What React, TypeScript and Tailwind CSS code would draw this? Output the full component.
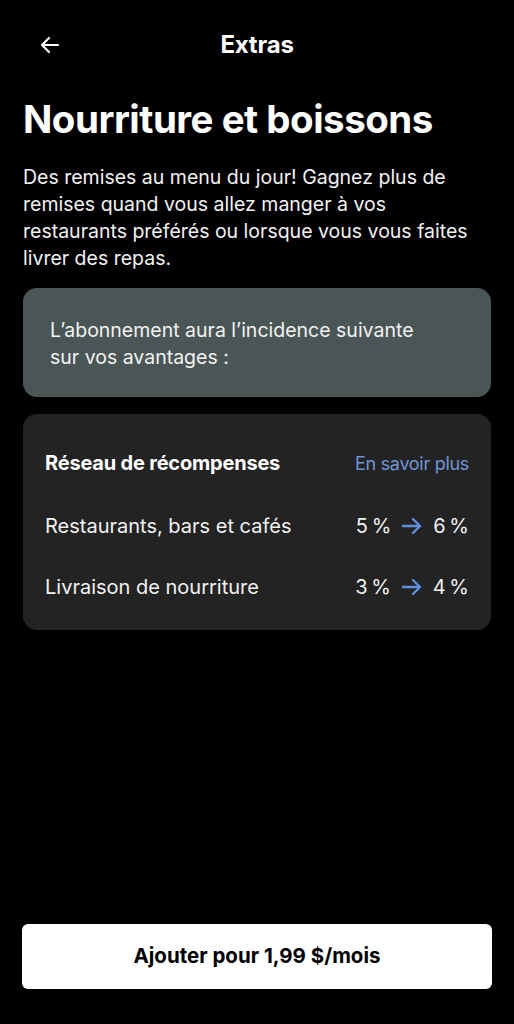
import React from "react";

function Arrow({ className }: { className?: string }) {
  return (
    <svg viewBox="0 0 24 24" className={className} fill="none" stroke="currentColor" strokeWidth={2.2} strokeLinecap="round" strokeLinejoin="round">
      <path d="M20 12H4M11 5l-7 7 7 7" />
    </svg>
  );
}

function RightArrow() {
  return (
    <svg viewBox="0 0 24 24" className="w-[24px] h-[24px] text-[#5f8fe0]" fill="none" stroke="currentColor" strokeWidth={2.4} strokeLinecap="round" strokeLinejoin="round">
      <path d="M3 12h17M13 5l7 7-7 7" />
    </svg>
  );
}

export default function App() {
  return (
    <div className="w-[514px] h-[1024px] bg-black text-white flex flex-col font-['Inter',sans-serif]">
      <div className="h-[90px] flex items-center relative px-[38px]">
        <Arrow className="w-[24px] h-[24px] text-white" />
        <div className="absolute left-0 right-0 text-center text-[24px] font-bold tracking-[-0.2px] pointer-events-none">Extras</div>
      </div>
      <div className="px-[23px] flex flex-col">
        <h1 className="text-[38.5px] font-bold leading-[42px] tracking-[-0.5px] mt-[8px]">Nourriture et boissons</h1>
        <p className="text-[19.5px] leading-[27px] mt-[24px] text-[#f2f2f2]">
          Des remises au menu du jour! Gagnez plus de remises quand vous allez manger à vos restaurants préférés ou lorsque vous vous faites livrer des repas.
        </p>
        <div className="mt-[16px] rounded-[14px] bg-[#4a5656] h-[109px] pl-[27px] pr-[55px] pt-[29px] text-[19.5px] leading-[27px] text-[#f2f2f2]">
          L’abonnement aura l’incidence suivante sur vos avantages :
        </div>
        <div className="mt-[17px] rounded-[14px] bg-[#232323] h-[216px] px-[22px] pt-[35px] flex flex-col">
          <div className="flex justify-between items-center h-[28px]">
            <span className="text-[20px] font-bold tracking-[-0.2px]">Réseau de récompenses</span>
            <span className="text-[18px] text-[#6f95d8] tracking-[-0.3px]">En savoir plus</span>
          </div>
          <div className="flex justify-between items-center h-[28px] mt-[35px]">
            <span className="text-[20px] text-[#f2f2f2]">Restaurants, bars et cafés</span>
            <span className="flex items-center gap-[9px] text-[20px] text-[#f2f2f2]">5{"\u202F"}% <RightArrow /> 6{"\u202F"}%</span>
          </div>
          <div className="flex justify-between items-center h-[28px] mt-[33px]">
            <span className="text-[20px] text-[#f2f2f2]">Livraison de nourriture</span>
            <span className="flex items-center gap-[9px] text-[20px] text-[#f2f2f2]">3{"\u202F"}% <RightArrow /> 4{"\u202F"}%</span>
          </div>
        </div>
      </div>
      <div className="flex-1" />
      <div className="px-[22px] pb-[35px]">
        <button className="w-full h-[65px] bg-white rounded-[6px] text-black text-[20.5px] font-bold">Ajouter pour 1,99 $/mois</button>
      </div>
    </div>
  );
}
